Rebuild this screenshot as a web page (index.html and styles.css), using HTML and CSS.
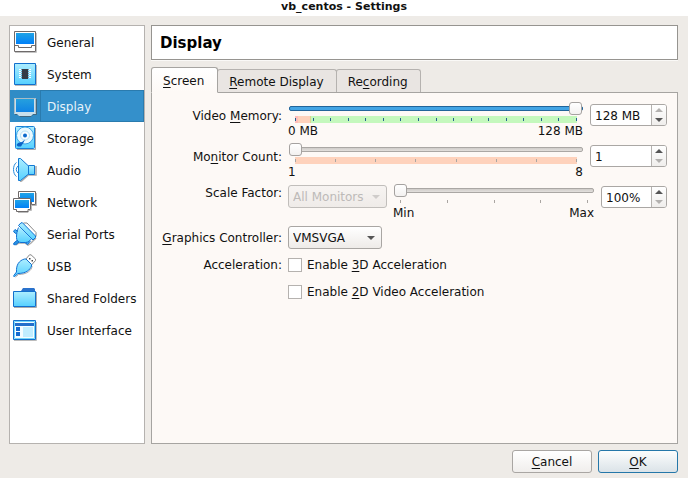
FILE: index.html
```html
<!DOCTYPE html>
<html lang="en">
<head>
<meta charset="utf-8">
<title>vb_centos - Settings</title>
<link rel="stylesheet" href="styles.css">
</head>
<body>
<svg class="defs" width="0" height="0" aria-hidden="true">
  <defs>
    <linearGradient id="deep" x1="0" y1="0" x2="0" y2="1"><stop offset="0" stop-color="#1fa3e6"/><stop offset="1" stop-color="#0080f8"/></linearGradient>
    <linearGradient id="screen" x1="0" y1="0" x2="0" y2="1"><stop offset="0" stop-color="#25a0de"/><stop offset="1" stop-color="#1083e4"/></linearGradient>
    <linearGradient id="pale" x1="0" y1="0" x2="0" y2="1"><stop offset="0" stop-color="#aeeeff"/><stop offset="1" stop-color="#55d0ff"/></linearGradient>
  </defs>
</svg>
<header class="titlebar">vb_centos - Settings</header>
<div class="dialog">
  <div class="content">
    <nav class="sidebar" aria-label="Categories">
      <a class="item" href="#general">
        <svg class="icon" viewBox="0 0 24 24"><path d="M2 22.5h21.5V3" fill="none" stroke="#c4c4c4"/><path d="M1.500 1.500h21v20h-21z" fill="#fff" stroke="#6e6a6a"/><path d="M3 3h18v11H3z" fill="url(#deep)"/><path d="M1.500 15.500h4v2h13v-2h4" fill="none" stroke="#6e6a6a"/></svg>
        <span>General</span></a>
      <a class="item" href="#system">
        <svg class="icon" viewBox="0 0 24 24"><path d="M2 23.500h21.500V3" fill="none" stroke="#bbb"/><path d="M1.500 1.500h21v21h-21z" fill="url(#pale)" stroke="#1270cd"/><path d="M6 7.500h12M6 9.500h12M6 11.500h12M6 13.500h12M6 15.500h12" stroke="#fff"/><path d="M8 7.500h8M8 9.500h8M8 11.500h8M8 13.500h8M8 15.500h8" stroke="#8298a8"/><path d="M9 7h6v10H9z" fill="#343c46"/></svg>
        <span>System</span></a>
      <a class="item selected" href="#display" aria-current="page">
        <svg class="icon" viewBox="0 0 24 24"><path d="M2 20.500h3l2 2h11l2-2h3.500V5" fill="none" stroke="#41677f"/><path d="M1 4h22v16h-3l-2 2H6l-2-2H1z" fill="#c9dfeb"/><path d="M1.500 19.500v-15h21v15" fill="none" stroke="#a8bcc6"/><path d="M3 5h18v13H3z" fill="url(#screen)"/></svg>
        <span>Display</span></a>
      <a class="item" href="#storage">
        <svg class="icon" viewBox="0 0 24 24"><path d="M4 23.500h18.500V2" fill="none" stroke="#aaa"/><rect x="2.500" y=".5" width="19" height="22" rx="1" fill="url(#pale)" stroke="#1a80d8"/><circle cx="12" cy="9.500" r="8.500" fill="#e9f9ff" stroke="#3ba4e6"/><circle cx="12" cy="9.500" r="4.500" fill="#f8fdff" stroke="#b4dff5"/><circle cx="12" cy="9.500" r="2" fill="#0c69cc"/><path d="M12 13.500l-1.500 3-2.500 4H5l-1.500-1.500L5 17l4-1z" fill="#0b62c6"/></svg>
        <span>Storage</span></a>
      <a class="item" href="#audio">
        <svg class="icon" viewBox="0 0 24 24"><path d="M7 23.500l1.500-.5 7-6H23V8" fill="none" stroke="#aaa" stroke-width="1.500"/><path d="M5.500.5h2L15.500 8v8l-8 6.500h-2z" fill="url(#pale)" stroke="#1278d3"/><path d="M15.500 7.500h6v9h-6z" fill="url(#pale)" stroke="#1278d3"/><path d="M3.500 4.500C-.5 7 -.5 16 3.500 18.500M5 8Q1.500 11.500 5 15" fill="none" stroke="#2389da"/></svg>
        <span>Audio</span></a>
      <a class="item" href="#network">
        <svg class="icon" viewBox="0 0 24 24"><path d="M19 15.500h4.500V3M18.500 10v10.500H16l-1 2H5" fill="none" stroke="#bbb"/><path d="M5.500 1.500h17v13h-4v-7h-13z" fill="#fff" stroke="#6e6a6a"/><path d="M7 3h14v9H7z" fill="url(#deep)"/><path d="M.5 8.500h17v11H15v2H3.500v-2h-3z" fill="#fff" stroke="#6e6a6a"/><path d="M2 10h14v8H2z" fill="url(#deep)"/></svg>
        <span>Network</span></a>
      <a class="item" href="#serial">
        <svg class="icon" viewBox="0 0 24 24"><path d="M10.500 1h3.500L23 10.500v4" fill="#fff" stroke="#888"/><path d="M3 23l3-2h6l3 2 3-2 5-5" fill="none" stroke="#aaa" stroke-width="1.500"/><path d="M4.500 18L.8 21v1.700h2L6 20" fill="#2a92e0" stroke="#0f6fd2"/><path d="M12 20.500l2.500 2 3-3.500M3.500 12L.8 10v-1L2 7.500l3 2" fill="#49b2ef" stroke="#0f6fd2"/><path d="M5.500 3.500L8 .8h1.500L22.500 14v1.500L20 18z" fill="url(#pale)" stroke="#0f6fd2" stroke-linejoin="round"/><path d="M7 5.500C4 9 3.500 12 3.500 15.500c0 3 2 5 4.500 5h4.500c3 0 4-2 6-3.500z" fill="url(#pale)"/><path d="M5.500 5.500C4 9 3.500 12 3.500 15.500c0 3 2 5 4.500 5h4.500c3 0 4-2 6-3.500" fill="none" stroke="#0f6fd2"/></svg>
        <span>Serial Ports</span></a>
      <a class="item" href="#usb">
        <svg class="icon" viewBox="0 0 24 24"><path d="M12.500 5.500l4-4.700h1.500L22.500 5v1.500L18.500 11z" fill="#fff" stroke="#888"/><path d="M16 4h1.500v1.500H16zM18.500 6H20v1.500h-1.500z" fill="#444"/><path d="M2.500 23l3-2.500c8 0 13.500-4 13.500-8.500" fill="none" stroke="#aaa"/><path d="M11.500 5h1.500l5.500 5.500v1.500C17 16 13 19.500 5 19.500L1.500 22.500H.8V21.500L3.500 18C3 11 6 6.500 11.500 5z" fill="url(#pale)" stroke="#0f6fd2"/></svg>
        <span>USB</span></a>
      <a class="item" href="#shared">
        <svg class="icon" viewBox="0 0 24 24"><path d="M1 21.500h22.500V6" fill="none" stroke="#aaa"/><path d="M8 5l2-3h11l1 1v3H8z" fill="#2a72cc"/><path d="M.5 5.500h22v15H.5z" fill="url(#pale)" stroke="#1270cd"/></svg>
        <span>Shared Folders</span></a>
      <a class="item" href="#interface">
        <svg class="icon" viewBox="0 0 24 24"><path d="M1 22.500h22.500V4" fill="none" stroke="#bbb"/><path d="M.5 2.500h22v19H.5z" fill="#f4fcff" stroke="#1270cd"/><path d="M1.500 3.500h20v17h-20z" fill="none" stroke="#72d5fa"/><path d="M2 5h19v3H2z" fill="#236fcb"/><path d="M3 9h4v4H3zM3 14h4v4H3z" fill="#116bd0"/><path d="M10 9h10v10H10z" fill="#c0edff"/></svg>
        <span>User Interface</span></a>
    </nav>
    <main class="page">
      <h1>Display</h1>
      <div class="tabs" role="tablist">
        <button class="tab active" role="tab" aria-selected="true"><u>S</u>creen</button>
        <button class="tab" role="tab" aria-selected="false"><u>R</u>emote Display</button>
        <button class="tab" role="tab" aria-selected="false">Re<u>c</u>ording</button>
      </div>
      <form class="panel">
        <div class="row tall">
          <label class="name" for="memory">Video <u>M</u>emory:</label>
          <div class="gauge">
            <input class="full" id="memory" type="range" min="0" max="128" value="128">
            <div class="scale memory"><i></i><i></i><i></i><i></i><i></i><i></i><i></i><i></i><i></i><i></i><i></i><i></i><i></i><i></i><i></i><i></i><i></i></div>
            <div class="ends"><span>0 MB</span><span>128 MB</span></div>
          </div>
          <div class="spin"><input type="text" value="128 MB" aria-label="Video memory"><span class="steps"><button class="up" type="button" aria-label="Increase" disabled></button><button class="down" type="button" aria-label="Decrease"></button></span></div>
        </div>
        <div class="row tall">
          <label class="name" for="monitors">Mo<u>n</u>itor Count:</label>
          <div class="gauge">
            <input id="monitors" type="range" min="1" max="8" value="1">
            <div class="scale count"><i></i><i></i><i></i><i></i><i></i><i></i><i></i><i></i></div>
            <div class="ends"><span>1</span><span>8</span></div>
          </div>
          <div class="spin"><input type="text" value="1" aria-label="Monitor count"><span class="steps"><button class="up" type="button" aria-label="Increase"></button><button class="down" type="button" aria-label="Decrease" disabled></button></span></div>
        </div>
        <div class="row tall">
          <label class="name short" for="factor">Scale Factor:</label>
          <span class="combo disabled"><select aria-label="Monitor" disabled><option>All Monitors</option></select></span>
          <div class="gauge">
            <input id="factor" type="range" min="100" max="200" value="100">
            <div class="scale"><i></i><i></i><i></i><i></i><i></i></div>
            <div class="ends"><span>Min</span><span>Max</span></div>
          </div>
          <div class="spin narrow"><input type="text" value="100%" aria-label="Scale factor"><span class="steps"><button class="up" type="button" aria-label="Increase"></button><button class="down" type="button" aria-label="Decrease" disabled></button></span></div>
        </div>
        <div class="row">
          <label class="name" for="controller"><u>G</u>raphics Controller:</label>
          <span class="combo controller"><select id="controller"><option>VMSVGA</option></select></span>
        </div>
        <div class="row">
          <span class="name">Acceleration:</span>
          <label class="check"><input type="checkbox"><span>Enable <u>3</u>D Acceleration</span></label>
        </div>
        <div class="row">
          <span class="name"></span>
          <label class="check"><input type="checkbox"><span>Enable <u>2</u>D Video Acceleration</span></label>
        </div>
      </form>
    </main>
  </div>
  <footer class="actions">
    <button class="action" type="button"><u>C</u>ancel</button>
    <button class="action default" type="button"><u>O</u>K</button>
  </footer>
</div>
</body>
</html>
```
FILE: styles.css
```css
* { box-sizing: border-box; }
body {
  margin: 0;
  min-height: 100vh;
  display: flex;
  flex-direction: column;
  background: #eeebe7;
  color: #111;
  font: 12px/14px "DejaVu Sans", sans-serif;
}
button, input, select { font: inherit; color: inherit; margin: 0; }
u { text-decoration: underline; text-underline-offset: 2px; text-decoration-thickness: 1px; text-decoration-skip-ink: none; }
.defs { position: absolute; }

.titlebar {
  height: 16px;
  background: #fff;
  font-size: 11px;
  font-weight: bold;
  line-height: 13px;
  text-align: center;
}
.dialog { flex: 1; display: flex; flex-direction: column; padding: 9px 10px 5px 9px; }
.content { flex: 1; display: flex; gap: 6px; }

.sidebar { width: 136px; background: #fff; border: 1px solid #b5b2af; }
.item {
  display: flex;
  align-items: center;
  height: 32px;
  padding-left: 3px;
  gap: 3px;
  color: #111;
  text-decoration: none;
}
.icon { width: 24px; height: 24px; flex: none; }
.item span { flex: 1; padding: 2px 0 0 6px; line-height: 28px; border: 1px solid transparent; white-space: nowrap; }
.selected { background: #308cc6; color: #e8f3fa; }
.selected span { background: #3490cb; border-color: #2a7bae; }

.page { flex: 1; display: flex; flex-direction: column; }
h1 {
  margin: 0 0 7px;
  height: 35px;
  padding: 1px 8px 0;
  border: 1px solid #969490;
  background: #fff;
  box-shadow: 0 1px 0 #faf9f7;
  color: #000;
  font-size: 15px;
  line-height: 33px;
}
.tabs { display: flex; align-items: flex-end; height: 26px; margin-bottom: -1px; }
.tab {
  height: 24px;
  padding: 2px 12px 0 11px;
  margin-left: -1px;
  border: 1px solid #b5b2af;
  border-bottom-color: #a6a4a1;
  border-radius: 3px 3px 0 0;
  background: #e9e5e2;
}
.tab.active {
  height: 26px;
  margin-left: 0;
  padding-right: 13px;
  border-color: #a6a4a1;
  border-bottom-color: #fdf9f6;
  background: linear-gradient(#fff, #fdf9f6);
  z-index: 1;
}
.panel {
  flex: 1;
  padding: 8px 10px 0 8px;
  border: 1px solid #a6a4a1;
  background: #fdf9f6;
}

.row { display: flex; align-items: center; gap: 6px; height: 27px; }
.row.tall { height: 41px; align-items: flex-start; }
.name { width: 122px; text-align: right; white-space: nowrap; }
.tall .name { line-height: 30px; }
.tall .name.short { line-height: 20px; }
.gauge { flex: 1; min-width: 0; padding: 2px 1px 0; }

input[type="range"] {
  appearance: none;
  display: block;
  width: 100%;
  height: 11px;
  background: none;
}
input[type="range"]::-webkit-slider-runnable-track {
  height: 5px;
  border: 1px solid #aaa7a4;
  border-radius: 2px;
  background: linear-gradient(#cfccc9, #e3e0dd);
}
input[type="range"].full::-webkit-slider-runnable-track { border-color: #22659a; background: #43a4e4; }
input[type="range"]::-webkit-slider-thumb {
  appearance: none;
  width: 13px;
  height: 13px;
  margin: -5px 0 0 -1px;
  border: 1px solid #a5a2a0;
  border-radius: 3px;
  background: linear-gradient(#fff, #f3f1f0);
}
input[type="range"].full::-webkit-slider-thumb { margin: -5px -1px 0 0; }
.scale { display: flex; justify-content: space-between; height: 7px; margin: 2px 6px 1px; padding: 2px 0; }
.scale i { width: 1px; background: #aaa6a2; }
.memory { background: linear-gradient(to right, #ffbdbb 3px, #fed2bc 3px 15px, #dcd591 15px 16px, #c4f8bd 16px); }
.memory i { background: #246091; }
.count { background: #fed2bc; }
.ends { display: flex; justify-content: space-between; margin: 0 0 0 -1px; line-height: 14px; }

.spin {
  display: flex;
  width: 77px;
  height: 22px;
  margin-top: 3px;
  border: 1px solid #aaa7a4;
  border-radius: 3px;
  background: #fff;
  overflow: hidden;
}
.spin.narrow { width: 66px; }
.spin input { flex: 1; min-width: 0; padding: 2px 4px 0; border: 0; background: none; }
.steps { width: 15px; display: flex; flex-direction: column; border-left: 1px solid #b5b2af; background: linear-gradient(#fff, #f0eeec); }
.steps button { flex: 1; display: flex; justify-content: center; align-items: center; padding: 0; border: 0; background: none; color: #555; }
.steps button:disabled { color: #b3b1af; }
.steps button::before { content: ""; border: 4px solid transparent; }
.up::before { border-top-width: 0 !important; border-bottom-color: currentColor !important; }
.down::before { border-bottom-width: 0 !important; border-top-color: currentColor !important; }

.combo { position: relative; width: 99px; height: 23px; }
.tall .combo { margin-top: 2px; }
.combo.controller { width: 94px; }
.combo select {
  appearance: none;
  width: 100%;
  height: 100%;
  padding: 0 4px;
  border: 1px solid #a9a6a3;
  border-radius: 3px;
  background: linear-gradient(#fff, #eeebe8);
}
.combo::after {
  content: "";
  position: absolute;
  right: 7px;
  top: 10px;
  border: 4px solid transparent;
  border-top-color: #555;
  border-bottom: 0;
  pointer-events: none;
}
.combo.disabled select { color: #bdbab8; border-color: #c1bebb; background: linear-gradient(#f7f4f2, #efebe8); opacity: 1; }
.combo.disabled::after { border-top-color: #cfccca; }

.check { display: flex; align-items: center; gap: 5px; }
.check input { appearance: none; width: 14px; height: 14px; border: 1px solid #b5b2af; background: #fff; }

.actions { display: flex; justify-content: flex-end; gap: 6px; padding-top: 6px; }
.action {
  width: 80px;
  height: 23px;
  padding: 0;
  border: 1px solid #a9a6a3;
  border-radius: 3px;
  background: linear-gradient(#fff, #f0eeec);
}
.action.default { border-color: #2577a9; background: linear-gradient(#fcfdfd, #dbe3e8); }
```
